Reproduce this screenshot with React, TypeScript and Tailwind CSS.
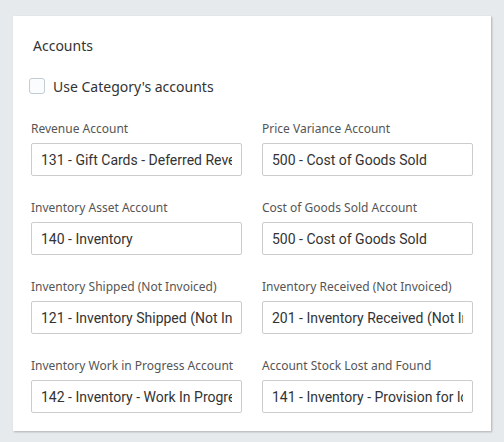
import React from 'react';

const fields = [
  ['Revenue Account', '131 - Gift Cards - Deferred Revenue'],
  ['Price Variance Account', '500 - Cost of Goods Sold'],
  ['Inventory Asset Account', '140 - Inventory'],
  ['Cost of Goods Sold Account', '500 - Cost of Goods Sold'],
  ['Inventory Shipped (Not Invoiced)', '121 - Inventory Shipped (Not Invoiced)'],
  ['Inventory Received (Not Invoiced)', '201 - Inventory Received (Not Invoiced)'],
  ['Inventory Work in Progress Account', '142 - Inventory - Work In Progress'],
  ['Account Stock Lost and Found', '141 - Inventory - Provision for lost and found'],
];

const App: React.FC = () => {
  return (
    <div className="min-h-[442px] bg-[#e7eaed] pt-[16px] pl-[13px]">
      <div className="w-[478px] h-[415px] bg-white shadow-[1px_1px_2px_rgba(0,0,0,0.25)] pt-[20px] px-[18px] font-['Noto_Sans',sans-serif]">
        <h3 className="ml-[2px] text-[14px] leading-[20px] text-[#333]">Accounts</h3>

        <label className="mt-[20px] -ml-[2px] flex items-center h-[20px] gap-[8px] text-[14px] text-[#333]">
          <span className="w-[16px] h-[16px] rounded-[3px] border border-[#c3ccd5] bg-[#fbfcfd]" />
          <span>Use Category's accounts</span>
        </label>

        {/* account selectors */}
        <div className="mt-[25px] grid grid-cols-[211px_211px] gap-x-[20px] gap-y-[24px]">
          {fields.map(([label, value]) => (
            <div key={label}>
              <div className="text-[12px] leading-[16px] text-[#555] mb-[6px] whitespace-nowrap">{label}</div>
              <input
                readOnly
                value={value}
                className="block w-full h-[33px] border border-[#cccccc] rounded-[2px] px-[9px] font-['Roboto',sans-serif] text-[14px] text-[#333] outline-none"
              />
            </div>
          ))}
        </div>
      </div>
    </div>
  );
};

export default App;
